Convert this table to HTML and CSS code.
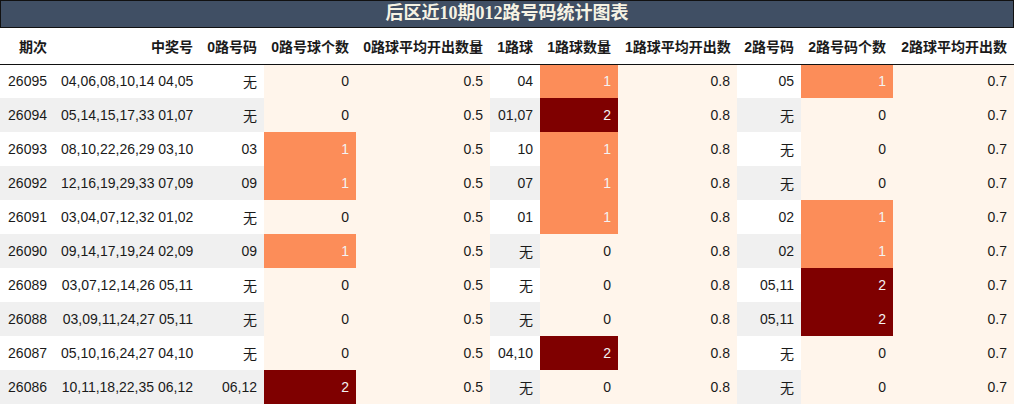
FILE: index.html
```html
<!DOCTYPE html>
<html lang="zh">
<head>
<meta charset="utf-8">
<title>后区近10期012路号码统计图表</title>
<link rel="stylesheet" href="styles.css">
</head>
<body>
<div class="page">
  <div class="title">后区近10期012路号码统计图表</div>
  <table class="stats">
    <colgroup>
      <col class="w54"><col class="w146"><col class="w64"><col class="w92"><col class="w134"><col class="w50"><col class="w78"><col class="w119"><col class="w64"><col class="w92"><col class="w121">
    </colgroup>
    <thead>
      <tr>
        <th>期次</th><th>中奖号</th><th>0路号码</th><th>0路号球个数</th><th>0路球平均开出数量</th><th>1路球</th><th>1路球数量</th><th>1路球平均开出数</th><th>2路号码</th><th>2路号码个数</th><th>2路球平均开出数</th>
      </tr>
    </thead>
    <tbody>
      <tr><td>26095</td><td>04,06,08,10,14 04,05</td><td>无</td><td class="c0">0</td><td class="c0">0.5</td><td>04</td><td class="c1">1</td><td class="c0">0.8</td><td>05</td><td class="c1">1</td><td class="c0">0.7</td></tr>
      <tr><td>26094</td><td>05,14,15,17,33 01,07</td><td>无</td><td class="c0">0</td><td class="c0">0.5</td><td>01,07</td><td class="c2">2</td><td class="c0">0.8</td><td>无</td><td class="c0">0</td><td class="c0">0.7</td></tr>
      <tr><td>26093</td><td>08,10,22,26,29 03,10</td><td>03</td><td class="c1">1</td><td class="c0">0.5</td><td>10</td><td class="c1">1</td><td class="c0">0.8</td><td>无</td><td class="c0">0</td><td class="c0">0.7</td></tr>
      <tr><td>26092</td><td>12,16,19,29,33 07,09</td><td>09</td><td class="c1">1</td><td class="c0">0.5</td><td>07</td><td class="c1">1</td><td class="c0">0.8</td><td>无</td><td class="c0">0</td><td class="c0">0.7</td></tr>
      <tr><td>26091</td><td>03,04,07,12,32 01,02</td><td>无</td><td class="c0">0</td><td class="c0">0.5</td><td>01</td><td class="c1">1</td><td class="c0">0.8</td><td>02</td><td class="c1">1</td><td class="c0">0.7</td></tr>
      <tr><td>26090</td><td>09,14,17,19,24 02,09</td><td>09</td><td class="c1">1</td><td class="c0">0.5</td><td>无</td><td class="c0">0</td><td class="c0">0.8</td><td>02</td><td class="c1">1</td><td class="c0">0.7</td></tr>
      <tr><td>26089</td><td>03,07,12,14,26 05,11</td><td>无</td><td class="c0">0</td><td class="c0">0.5</td><td>无</td><td class="c0">0</td><td class="c0">0.8</td><td>05,11</td><td class="c2">2</td><td class="c0">0.7</td></tr>
      <tr><td>26088</td><td>03,09,11,24,27 05,11</td><td>无</td><td class="c0">0</td><td class="c0">0.5</td><td>无</td><td class="c0">0</td><td class="c0">0.8</td><td>05,11</td><td class="c2">2</td><td class="c0">0.7</td></tr>
      <tr><td>26087</td><td>05,10,16,24,27 04,10</td><td>无</td><td class="c0">0</td><td class="c0">0.5</td><td>04,10</td><td class="c2">2</td><td class="c0">0.8</td><td>无</td><td class="c0">0</td><td class="c0">0.7</td></tr>
      <tr><td>26086</td><td>10,11,18,22,35 06,12</td><td>06,12</td><td class="c2">2</td><td class="c0">0.5</td><td>无</td><td class="c0">0</td><td class="c0">0.8</td><td>无</td><td class="c0">0</td><td class="c0">0.7</td></tr>
    </tbody>
  </table>
</div>
</body>
</html>
```

FILE: styles.css
```css
html, body {
  margin: 0;
  padding: 0;
  background: #ffffff;
}

.page {
  width: 1014px;
  font-family: "Liberation Sans", "Noto Sans CJK SC", sans-serif;
  color: #1a1a1a;
}

.title {
  box-sizing: border-box;
  height: 28px;
  background: #404f64;
  border: 1px solid #111;
  color: #f6f3e4;
  font-family: "Liberation Serif", "Noto Sans CJK SC", serif;
  font-weight: bold;
  font-size: 18px;
  line-height: 25px;
  text-align: center;
}

.stats {
  width: 1014px;
  table-layout: fixed;
  border-collapse: collapse;
  border-spacing: 0;
  font-size: 14px;
}

.w54 { width: 54px; }
.w146 { width: 146px; }
.w64 { width: 64px; }
.w92 { width: 92px; }
.w134 { width: 134px; }
.w50 { width: 50px; }
.w78 { width: 78px; }
.w119 { width: 119px; }
.w121 { width: 121px; }

.stats th {
  height: 36px;
  padding: 0 7px;
  text-align: right;
  font-weight: bold;
  font-size: 14px;
  white-space: nowrap;
  border-bottom: 1px solid #111;
  box-sizing: border-box;
}

.stats td {
  height: 34px;
  padding: 0 7px;
  text-align: right;
  white-space: nowrap;
  box-sizing: border-box;
}

.stats tbody tr:nth-child(even) td {
  background: #f0f0f0;
}

.stats tbody tr td.c0 {
  background: #fff5eb;
  color: #1a1a1a;
}

.stats tbody tr td.c1 {
  background: #fc8d59;
  color: #f3f3f3;
}

.stats tbody tr td.c2 {
  background: #7f0000;
  color: #f3f3f3;
}
```
